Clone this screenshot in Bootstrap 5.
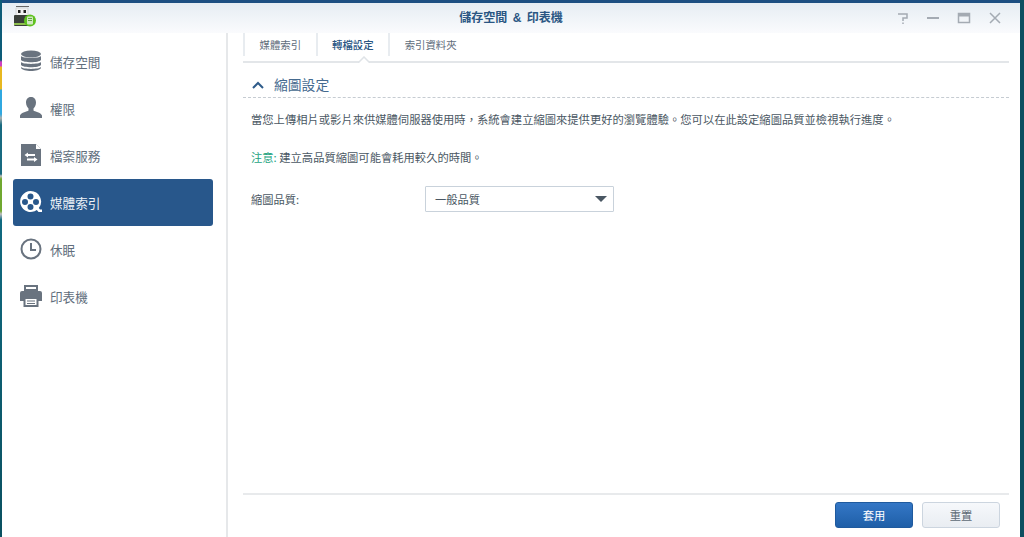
<!DOCTYPE html>
<html lang="zh-TW">
<head>
<meta charset="utf-8">
<title>儲存空間 &amp; 印表機</title>
<link href="https://cdn.jsdelivr.net/npm/bootstrap@5.3.0/dist/css/bootstrap.min.css" rel="stylesheet">
<style>
html,body{height:100%;overflow:hidden}
body{font-family:"Noto Sans CJK TC","Liberation Sans",sans-serif;font-size:11.25px;color:#4a5a6a;
 background:linear-gradient(180deg,#0d5c78 0,#0d5c78 60px,#d040c0 62px,#d040c0 66px,#e8b820 67px,#e8b820 89px,#30a8e0 90px,#30a8e0 114px,#a8b0b0 118px,#186a80 125px,#186a80 174px,#c0c0c0 176px,#70a830 179px,#70a830 211px,#c0c0c0 214px,#106a80 220px,#0a5060 537px) left top/2px 100% no-repeat,#0c4f60;
 padding:0 4px 0 2px}
.dsm-win{height:100%;background:#fff;border-top:3px solid #1d4f82;display:flex;flex-direction:column}
.dsm-head{height:30px;flex:none;background:linear-gradient(180deg,#e6edf3,#fafbfd);display:flex;align-items:center;padding-left:11px}
.dsm-title{flex:1;text-align:center;font-size:12px;font-weight:700;color:#2a5683;margin:0 0 0 94px;word-spacing:2px;font-family:"Liberation Sans","Noto Sans CJK TC",sans-serif}
.dsm-ctrls{display:flex;margin-right:9px}
.dsm-ctrls svg{width:30px;height:14px;display:block}
.dsm-body{flex:1;display:flex;min-height:0}
.dsm-side{width:226px;flex:none;border-right:2px solid #e6e8ea;padding:5px 12px 0 11px}
.side-item{height:47px;width:200px;display:flex;align-items:center;gap:8px;padding:2px 0 0 7px;font-size:12.6px;color:#616e7c;border-radius:3px}
.side-item svg{width:22px;height:22px;flex:none;color:#69737f;margin-top:-3px}
.side-on{background:#28578b;color:#eef3f8}
.side-item.side-on svg{color:#fff}
.dsm-main{flex:1;display:flex;flex-direction:column;padding:0 11px 0 15px;min-width:0}
.dsm-tabs{height:30px;flex:none;display:flex;border-bottom:2px solid #e3e6e9;position:relative}
.dsm-tab{height:23px;padding:0 14.5px;display:flex;align-items:center;border-left:2px solid #e8ecf0;font-size:10.4px;color:#5f6d7b}
.dsm-tab:last-child{border-right:2px solid #e8ecf0}
.tab-on{color:#2a5683;font-weight:500}
.tab-arrow{position:absolute;left:115px;top:23px;width:12px;height:7px}
.sec-head{display:flex;align-items:center;gap:10px;height:35px;padding:9px 0 0 9px;border-bottom:1px dashed #c6ccd2;color:#456a8f;font-size:13.8px}
.sec-head svg{width:12px;height:8px}
.sec-text{margin:14px 0 0 8px;line-height:14px;white-space:nowrap;color:#4a5763;font-size:11.3px}
.sec-note{margin:24px 0 0 8px;line-height:14px;color:#4a5763;font-size:11.3px}
.sec-note b{color:#25a47f;font-weight:400}
.sec-form{display:flex;align-items:center;margin:22px 0 0 8px}
.sec-form label{width:174px;color:#4a5763}
.dsm-select{width:189px;height:26px;border:1px solid #c9d2db;display:flex;align-items:center;justify-content:space-between;padding:0 6px 0 9px;color:#4a5763;border-radius:1px}
.dsm-caret{width:0;height:0;border:6px solid transparent;border-top:6px solid #4a5763;border-bottom:0}
.dsm-foot{margin-top:auto;height:44px;flex:none;border-top:2px solid #e8eaec;display:flex;justify-content:flex-end;align-items:flex-start;gap:9px;padding:7px 9px 0 0}
.dsm-btn{width:78px;height:26px;padding:0;font-size:11.25px;border-radius:3px;line-height:24px}
.btn-apply{background:linear-gradient(180deg,#3477c6,#1f5fa8);border:1px solid #1f5a9e;color:#fff}
.btn-reset{background:linear-gradient(180deg,#f6f8fb,#e9edf2);border:1px solid #ccd5df;color:#5e6a75}
</style>
</head>
<body>
<div class="dsm-win">
 <header class="dsm-head">
  <svg width="24" height="24" viewBox="0 0 24 24" aria-hidden="true">
   <rect x="3" y="-1" width="13" height="2" fill="#666"/>
   <rect x="3" y="2" width="12" height="8" fill="#f2f2f2" stroke="#bbb" stroke-width=".5"/>
   <rect x="5" y="4" width="2.5" height="3" fill="#222"/><rect x="10.5" y="4" width="2.5" height="3" fill="#222"/>
   <rect x="1" y="9" width="16" height="11" rx="1" fill="#3a3f3a"/>
   <rect x="1" y="17" width="16" height="2" fill="#8fbf4f"/>
   <circle cx="17" cy="14.500" r="6" fill="#5fc21f"/>
   <rect x="14" y="10.500" width="6" height="8" rx="1" fill="#cfe8c0"/>
   <rect x="15" y="12" width="4" height="1" fill="#5fa040"/><rect x="15" y="14" width="4" height="1" fill="#5fa040"/>
  </svg>
  <h1 class="dsm-title">儲存空間 &amp; 印表機</h1>
  <div class="dsm-ctrls">
   <svg viewBox="0 0 30 14" fill="none" stroke="#a4abb3" stroke-width="1.500"><path d="M7 3h9v4h-4v3M12 11.500v1.500"/></svg>
   <svg viewBox="0 0 30 14" fill="none" stroke="#a4abb3" stroke-width="2"><path d="M6 7h12"/></svg>
   <svg viewBox="0 0 30 14" fill="none" stroke="#a4abb3"><rect x="7.500" y="2.500" width="11" height="9" stroke-width="1.500"/><path d="M7 4h12" stroke-width="3"/></svg>
   <svg viewBox="0 0 30 14" fill="none" stroke="#a4abb3" stroke-width="1.500"><path d="M9 2l10 10M19 2L9 12"/></svg>
  </div>
 </header>
 <div class="dsm-body">
  <nav class="dsm-side">
   <div class="side-item">
    <svg viewBox="0 0 22 22" fill="currentColor"><ellipse cx="11" cy="4" rx="10" ry="3.500"/><path d="M1 6c2 2.500 18 2.500 20 0v4c-2 3-18 3-20 0zM1 12c2 2.500 18 2.500 20 0v3c-2 3-18 3-20 0zM1 17c2 2.500 18 2.500 20 0v1c-2 4-18 4-20 0z"/></svg>儲存空間
   </div>
   <div class="side-item">
    <svg viewBox="0 0 22 22" fill="currentColor"><path d="M11 0c3.500 0 5 2.500 5 5.500 0 3-1.500 5-2.500 6v2c1 1 7.500 2 8.500 5v2.500H0V18.500c1-3 7.500-4 8.500-5v-2C7.500 10.500 6 8.500 6 5.500 6 2.500 7.500 0 11 0z"/></svg>權限
   </div>
   <div class="side-item">
    <svg viewBox="0 0 22 22"><path d="M1 0h15l5 5v17H1z" fill="currentColor"/><path d="M16 0v5h5z" fill="#fff"/><path d="M8 8.500L4.500 11 8 13.500V12h7v-2H8zM14 13l3.500 2.500L14 18v-1.500H7v-2h7z" fill="#fff"/></svg>檔案服務
   </div>
   <div class="side-item side-on">
    <svg viewBox="0 0 22 22" fill="currentColor"><path fill-rule="evenodd" d="M10.500 0a10.500 10.500 0 0 1 8.300 17l1.200 1.500h2V21h-3.500l-1.700-2a10.500 10.500 0 1 1-6.300-19zM10.500 2.500a3 3 0 1 0 0 6 3 3 0 0 0 0-6zM5 8a3 3 0 1 0 0 6 3 3 0 0 0 0-6zM16 8a3 3 0 1 0 0 6 3 3 0 0 0 0-6zM10.500 13a3 3 0 1 0 0 6 3 3 0 0 0 0-6z"/></svg>媒體索引
   </div>
   <div class="side-item">
    <svg viewBox="0 0 22 22" fill="none" stroke="currentColor"><circle cx="11" cy="11" r="9.500" stroke-width="2"/><path d="M11 5v7h5" stroke-width="2"/></svg>休眠
   </div>
   <div class="side-item">
    <svg viewBox="0 0 22 22"><path d="M5 1h12v4H5z" fill="none" stroke="currentColor" stroke-width="2"/><path d="M2 6h18a2 2 0 0 1 2 2v8h-4v-3H4v3H0V8a2 2 0 0 1 2-2z" fill="currentColor"/><path d="M4.500 13h13v8h-13z" fill="#fff" stroke="currentColor" stroke-width="2"/><path d="M7 16h8M7 18.500h8" stroke="currentColor"/></svg>印表機
   </div>
  </nav>
  <main class="dsm-main">
   <div class="dsm-tabs">
    <div class="dsm-tab">媒體索引</div>
    <div class="dsm-tab tab-on">轉檔設定</div>
    <div class="dsm-tab">索引資料夾</div>
    <svg class="tab-arrow" viewBox="0 0 12 7"><path d="M0 7L6 1l6 6" fill="#fff" stroke="#dfe3e7" stroke-width="1.500"/></svg>
   </div>
   <div class="sec-head">
    <svg viewBox="0 0 12 8" fill="none" stroke="#2f5c8a" stroke-width="2"><path d="M1 7l5-5 5 5"/></svg>
    <span>縮圖設定</span>
   </div>
   <p class="sec-text">當您上傳相片或影片來供媒體伺服器使用時，系統會建立縮圖來提供更好的瀏覽體驗。您可以在此設定縮圖品質並檢視執行進度。</p>
   <p class="sec-note"><b>注意:</b> 建立高品質縮圖可能會耗用較久的時間。</p>
   <div class="sec-form">
    <label>縮圖品質:</label>
    <div class="dsm-select"><span>一般品質</span><i class="dsm-caret"></i></div>
   </div>
   <div class="dsm-foot">
    <button type="button" class="btn dsm-btn btn-apply">套用</button>
    <button type="button" class="btn dsm-btn btn-reset">重置</button>
   </div>
  </main>
 </div>
</div>
<script src="https://cdn.jsdelivr.net/npm/bootstrap@5.3.0/dist/js/bootstrap.bundle.min.js"></script>
</body>
</html>
